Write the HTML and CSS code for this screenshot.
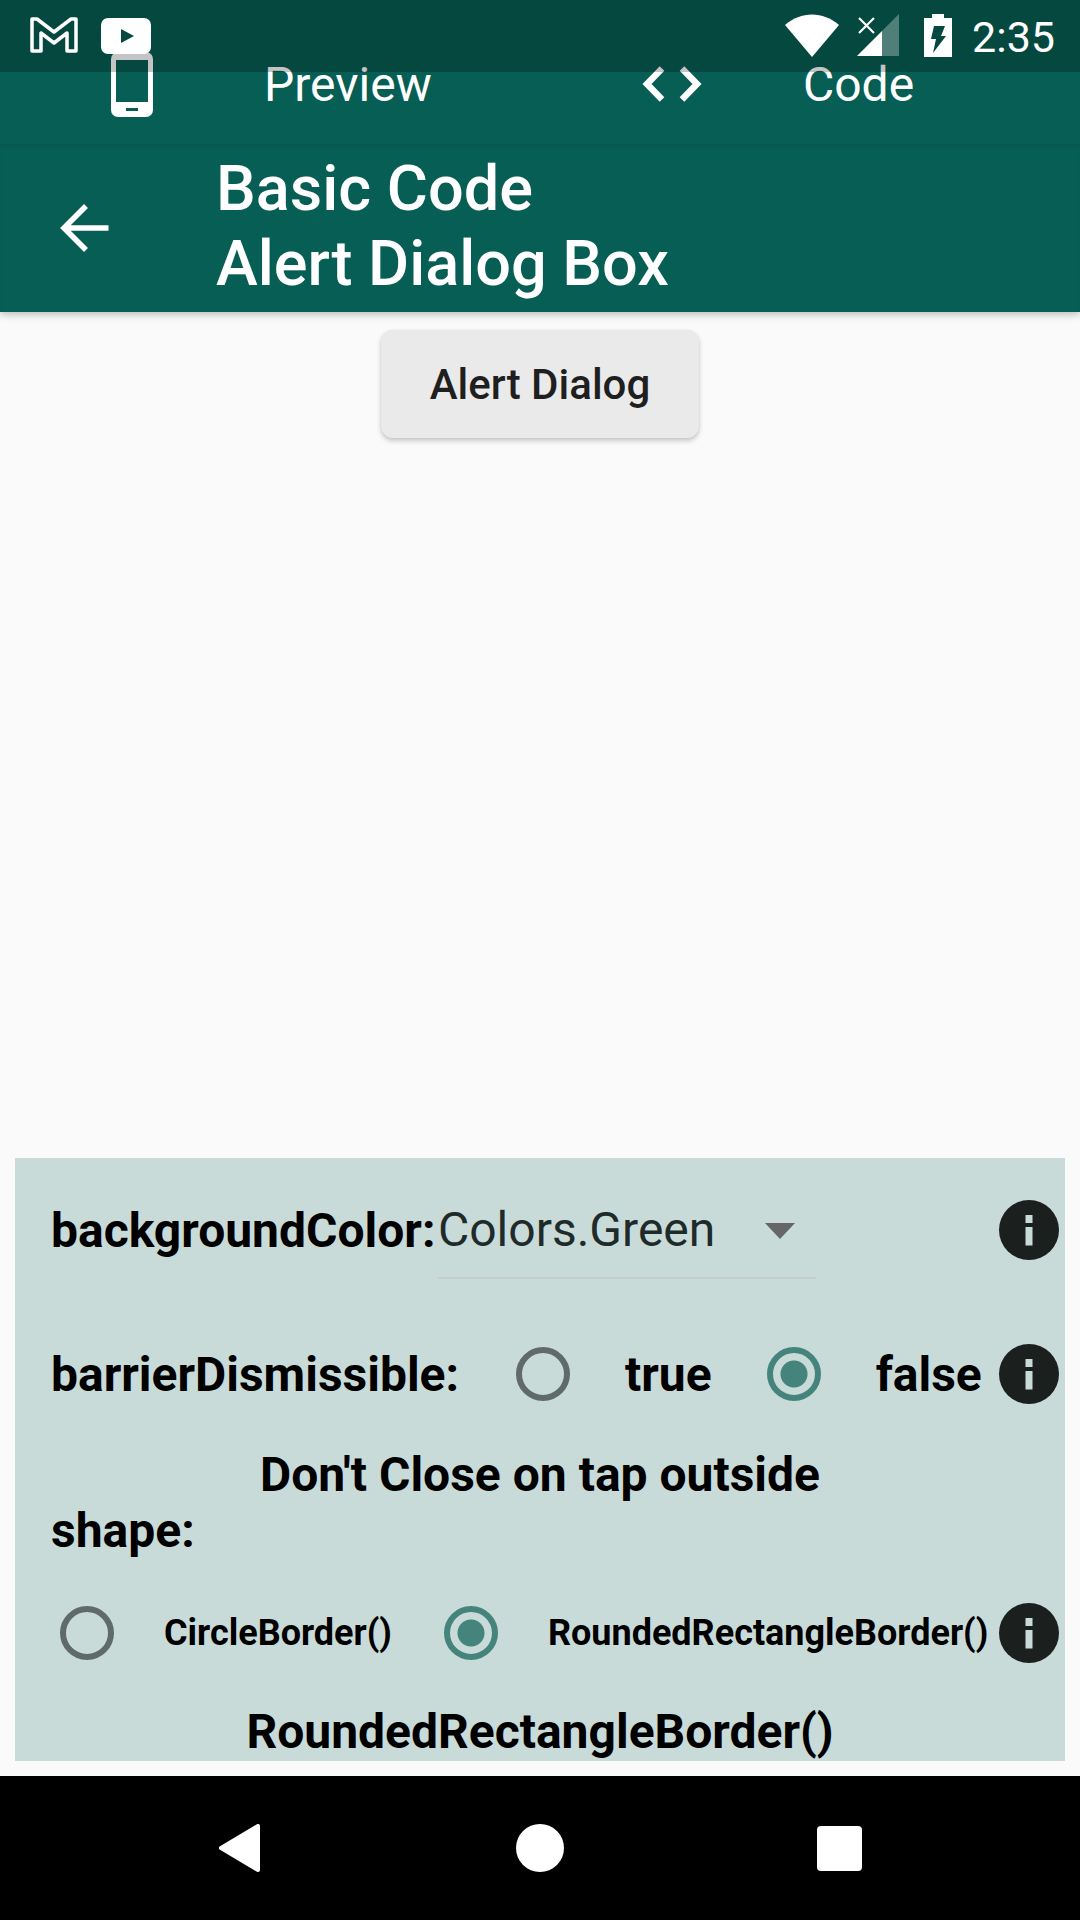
FILE: index.html
```html
<!DOCTYPE html>
<html lang="en">
<head>
<meta charset="utf-8">
<title>Alert Dialog Box</title>
<link rel="stylesheet" href="styles.css">
</head>
<body>
<svg class="defs" width="0" height="0" aria-hidden="true">
  <symbol id="info" viewBox="0 0 60 60">
    <circle cx="30" cy="30" r="30" fill="#1b1f1e"/>
    <rect x="26.5" y="15" width="7" height="8" fill="#c9dbd9"/>
    <rect x="26.5" y="27" width="7" height="18.5" fill="#c9dbd9"/>
  </symbol>
</svg>
<div class="screen">
  <header class="appbar">
    <div class="tabs">
      <div class="tab tab-preview">
        <svg class="icon-phone" width="42" height="65" viewBox="0 0 42 65">
          <path fill="#fff" fill-rule="evenodd" d="M7 0h28a7 7 0 0 1 7 7v51a7 7 0 0 1-7 7H7a7 7 0 0 1-7-7V7a7 7 0 0 1 7-7zM5 8v42h32V8zM15 56v3h12v-3z"/>
        </svg>
        <span class="tab-label">Preview</span>
      </div>
      <div class="tab tab-code">
        <svg class="icon-code" width="60" height="36" viewBox="0 0 60 36">
          <path fill="none" stroke="#fff" stroke-width="6.5" d="M20 2.500 5 18l15 15.500M40 2.500 55 18 40 33.500"/>
        </svg>
        <span class="tab-label">Code</span>
      </div>
    </div>
    <div class="titlebar">
      <svg class="icon-back" width="49" height="48" viewBox="0 0 49 48">
        <path fill="none" stroke="#fff" stroke-width="5.500" d="M48.500 24H4M26 2 4 24l22 22"/>
      </svg>
      <h1 class="title">Basic Code<br>Alert Dialog Box</h1>
    </div>
  </header>

  <main class="content">
    <div class="button-wrap"><button class="raised">Alert Dialog</button></div>
    <section class="panel">
      <div class="row row-color">
        <span class="label label-color">backgroundColor:</span>
        <div class="dropdown">
          <span class="dropdown-value">Colors.Green</span>
          <span class="caret"></span>
        </div>
        <svg class="info" width="60" height="60"><use href="#info"/></svg>
      </div>
      <div class="row row-barrier">
        <span class="label label-barrier">barrierDismissible:</span>
        <span class="radio radio-barrier-off"></span>
        <span class="label option-true">true</span>
        <span class="radio radio-on radio-barrier-on"></span>
        <span class="label option-false">false</span>
        <svg class="info" width="60" height="60"><use href="#info"/></svg>
      </div>
      <p class="label note">Don't Close on tap outside</p>
      <p class="label shape-label">shape:</p>
      <div class="row row-shape">
        <span class="radio radio-shape-off"></span>
        <span class="shape-option option-circle">CircleBorder()</span>
        <span class="radio radio-on radio-shape-on"></span>
        <span class="shape-option option-rounded">RoundedRectangleBorder()</span>
        <svg class="info" width="60" height="60"><use href="#info"/></svg>
      </div>
      <p class="label note note-shape">RoundedRectangleBorder()</p>
    </section>
  </main>

  <nav class="navbar">
    <svg class="nav-back" width="41" height="48" viewBox="0 0 41 48">
      <path fill="#fff" stroke="#fff" stroke-width="4" stroke-linejoin="round" d="M39 2v44L2 24z"/>
    </svg>
    <span class="nav-home"></span>
    <span class="nav-recent"></span>
  </nav>

  <div class="statusbar">
    <div class="status-left">
      <svg width="48" height="36" viewBox="0 0 48 36">
        <path fill="none" stroke="#fff" stroke-width="3.500" stroke-linejoin="round" d="M2 2h5l17 13L41 2h5v32h-9V16L24 26 11 16v18H2z"/>
      </svg>
      <svg class="icon-youtube" width="50" height="36" viewBox="0 0 50 36">
        <rect width="50" height="36" rx="7" fill="#fff"/>
        <path fill="#064840" d="M20 11v14l13-7z"/>
      </svg>
    </div>
    <div class="status-right">
      <svg class="icon-wifi" width="54" height="43" viewBox="0 0 54 43">
        <path fill="#fff" d="M0 11C16-3 38-3 54 11L27 43z"/>
      </svg>
      <svg class="icon-signal" width="42" height="43" viewBox="0 0 42 43">
        <path fill="#fff" opacity=".3" d="M42 0v42H25V17z"/>
        <path fill="#fff" d="M0 42 25 17v25z"/>
        <path fill="none" stroke="#fff" stroke-width="2.200" d="M2 4l15 15M17 4 2 19"/>
      </svg>
      <svg class="icon-battery" width="28" height="43" viewBox="0 0 28 43">
        <path fill="#fff" d="M8 0h12v4h8v39H0V4h8z"/>
        <path fill="#064840" d="M10 12h11l-4 10h5L9 39l3-14H7z"/>
      </svg>
      <span class="clock">2:35</span>
    </div>
  </div>
</div>
</body>
</html>
```

FILE: styles.css
```css
* { box-sizing: border-box; }

html, body {
  margin: 0;
  padding: 0;
}

body {
  font-family: Roboto, "Liberation Sans", sans-serif;
  background: #fafafa;
}

.defs { position: absolute; }

.screen {
  position: relative;
  width: 1080px;
  height: 1920px;
  display: flex;
  flex-direction: column;
  overflow: hidden;
}

/* App bar */
.appbar {
  flex: none;
  height: 312px;
  background: #075e54;
  color: #fff;
  box-shadow: 0 2px 8px rgba(0, 0, 0, .28);
  position: relative;
  z-index: 1;
}

.tabs {
  height: 144px;
  display: grid;
  grid-template-columns: 540px 540px;
}

.tab {
  display: flex;
  align-items: flex-start;
  padding-top: 52px;
}

.tab-preview { padding-left: 111px; }
.tab-code { padding-left: 102px; }

.icon-phone { flex: none; }
.icon-code { flex: none; margin-top: 14px; }

.tab-label {
  font-size: 48px;
  line-height: 66px;
}

.tab-preview .tab-label { margin-left: 111px; }
.tab-code .tab-label { margin-left: 101px; }

.titlebar {
  height: 168px;
  display: flex;
  align-items: center;
  padding: 0 0 0 60px;
  box-shadow: inset 0 4px 4px -2px rgba(0, 0, 0, .08);
}

.icon-back { flex: none; }

.title {
  margin: -4px 0 0 107px;
  font-size: 63px;
  font-weight: 500;
  line-height: 75px;
}

/* Main */
.content {
  flex: 1;
  display: flex;
  flex-direction: column;
  justify-content: space-between;
  padding-bottom: 15px;
}

.button-wrap {
  display: flex;
  justify-content: center;
  padding-top: 18px;
}

.raised {
  width: 318px;
  height: 108px;
  border: 0;
  border-radius: 12px;
  background: #eaeaea;
  color: #1f1f1f;
  font-family: inherit;
  font-size: 42px;
  font-weight: 500;
  box-shadow: 0 3px 5px rgba(0, 0, 0, .2), 0 0 2px rgba(0, 0, 0, .08);
}

.panel {
  margin: 0 15px;
  height: 603px;
  background: #c9dbd9;
  overflow: hidden;
}

.row {
  display: flex;
  align-items: center;
}

.row-color { height: 144px; padding-left: 36px; }
.row-barrier { height: 145px; padding: 0 0 1px 36px; }

.label {
  margin: 0;
  color: #000;
  font-size: 48px;
  font-weight: 700;
  white-space: nowrap;
}

.label-color { width: 387px; flex: none; }
.label-barrier { width: 465px; flex: none; }

.dropdown {
  flex: none;
  width: 377.500px;
  height: 144px;
  padding-top: 42px;
  display: flex;
  align-self: flex-start;
  position: relative;
}

.dropdown::after {
  content: "";
  position: absolute;
  left: 0;
  right: 0;
  top: 119px;
  border-top: 2px solid #c4cccc;
}

.dropdown-value {
  color: #1f2b2b;
  font-size: 48px;
  line-height: 60px;
}

.caret {
  margin: 23px 0 0 50px;
  width: 0;
  height: 0;
  border-left: 15px solid transparent;
  border-right: 15px solid transparent;
  border-top: 16px solid #666;
}

.info {
  flex: none;
  display: block;
  margin-left: auto;
  margin-right: 6px;
}

.radio {
  flex: none;
  display: block;
  width: 54px;
  height: 54px;
  border: 6px solid #5f6a69;
  border-radius: 50%;
}

.radio-on {
  border-color: #44847c;
  background: radial-gradient(circle, #44847c 0 13px, transparent 14px);
}

.option-true { margin-left: 55px; }
.radio-barrier-on { margin-left: 55px; }
.option-false { margin-left: 55px; }

.note {
  text-align: center;
  line-height: 56px;
}

.shape-label {
  padding-left: 36px;
  line-height: 56px;
}

.row-shape {
  height: 147px;
  padding-left: 45px;
}

.shape-option {
  font-size: 36px;
  font-weight: 700;
  color: #000;
  white-space: nowrap;
}

.option-circle { margin-left: 50px; }
.radio-shape-on { margin-left: 52px; }
.option-rounded { margin-left: 50px; }

.note-shape { line-height: 52px; }

/* Nav bar */
.navbar {
  flex: none;
  height: 144px;
  background: #000;
  position: relative;
  display: flex;
  align-items: center;
  padding-left: 219px;
}

.nav-back { flex: none; }

.nav-home {
  margin-left: 256px;
  width: 48px;
  height: 48px;
  border-radius: 50%;
  background: #fff;
}

.nav-recent {
  margin-left: 253px;
  width: 45px;
  height: 45px;
  border-radius: 4px;
  background: #fff;
}

/* Status bar overlays the app bar */
.statusbar {
  position: absolute;
  z-index: 2;
  left: 0;
  top: 0;
  width: 100%;
  height: 72px;
  background: rgba(0, 0, 0, .23);
  display: flex;
  justify-content: space-between;
  color: #fff;
}

.status-left {
  display: flex;
  align-items: flex-start;
  padding: 17px 0 0 30px;
}

.icon-youtube { margin: 1px 0 0 23px; }

.status-right {
  display: flex;
  align-items: flex-start;
  padding: 14px 25px 0 0;
}

.icon-signal { margin-left: 18px; }
.icon-battery { margin-left: 25px; }

.clock {
  margin-left: 20px;
  font-size: 43px;
  line-height: 47px;
}
```
